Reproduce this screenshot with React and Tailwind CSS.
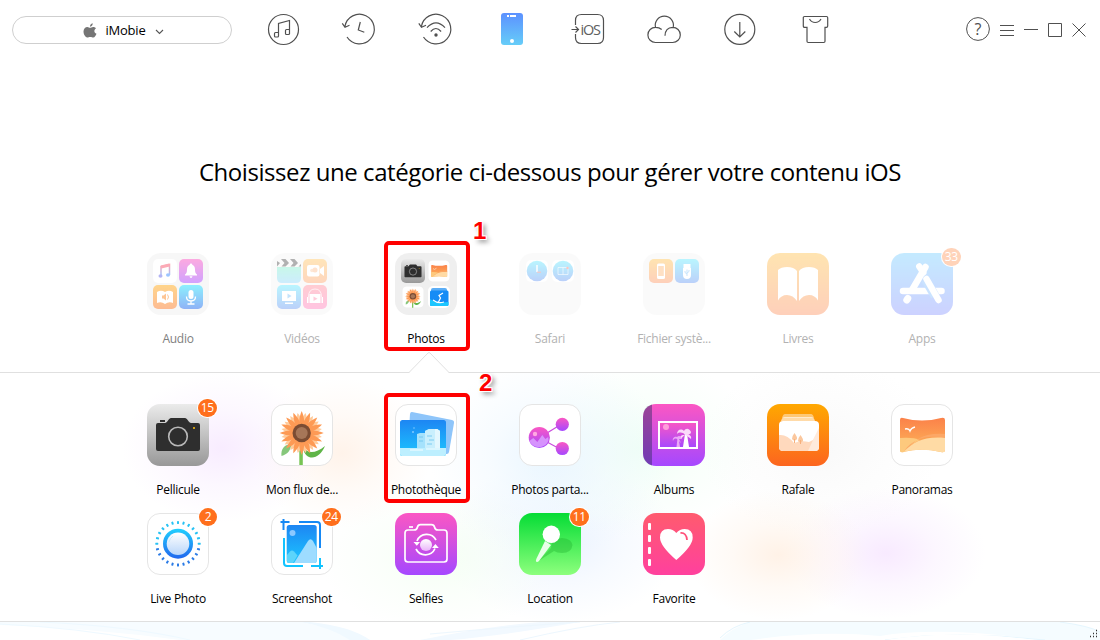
import React from "react";
import clsx from "clsx";

const GRADIENTS = [
  ["orange", "#ffa800", "#fc651f"],
  ["pink", "#fb57c3", "#a548ff"],
  ["cyan", "#1fd0ff", "#2167ee"],
  ["sky", "#1d86f3", "#1cc6ff"],
  ["green", "#05dc35", "#8dff7d"],
  ["rose", "#ff5b6e", "#ff409e"],
  ["grey", "#ebebeb", "#989898"],
  ["store", "#3fbcff", "#5a6bff"],
  ["phone", "#5c91ff", "#66cdf8"],
  ["lens", "#ffffff", "#b9d6fa"],
  ["selfie", "#ffffff", "#e9b4fa"],
  ["dusk", "#fb8149", "#fdb75b"],
  ["mint", "#4de9b8", "#5cc3fb"],
  ["azure", "#1ce1ff", "#2167ee"],
  ["book", "#ffab1a", "#fd7a29"],
  ["note", "#ff4f66", "#3c8dff"],
];

function Gradients() {
  return (
    <svg className="absolute h-0 w-0" aria-hidden="true">
      <defs>
        {GRADIENTS.map(([id, from, to]) => (
          <linearGradient key={id} id={id} x1="0" y1="0" x2="0" y2="1">
            <stop offset="0" stopColor={from} />
            <stop offset="1" stopColor={to} />
          </linearGradient>
        ))}
      </defs>
    </svg>
  );
}

// Every tile is drawn on a 62 x 62 grid
function Art({ children, ...props }) {
  return <svg width="62" height="62" viewBox="0 0 62 62" fill="none" {...props}>{children}</svg>;
}

const Filled = ({ fill }) => <rect width="62" height="62" rx="13" fill={fill} />;
const Blank = () => <rect x=".5" y=".5" width="61" height="61" rx="12.5" fill="#fff" stroke="#e5e5e5" />;

function CameraArt(props) {
  return (
    <Art {...props}>
      <Filled fill="url(#grey)" />
      <path d="M13 16h5v2h-5z" fill="#2e2e2e" />
      <path d="M11 19h7c2 0 4-5 6-5h14c2 0 4 5 6 5h7q2 0 2 2v24q0 2-2 2H11q-2 0-2-2V21q0-2 2-2z" fill="#2e2e2e" />
      <circle cx="31" cy="32.5" r="9.3" stroke="#b9b9b9" strokeWidth="1.6" />
      <path d="M46 23h2v2h-2z" fill="#c99b14" />
    </Art>
  );
}

function SunflowerArt(props) {
  return (
    <Art {...props}>
      <Blank />
      <path d="M28.3 42h3.5v19h-3.5z" fill="#77c455" />
      <path d="M10.5 52c-1-7 3-12 10-12-1 7-4 10-10 12z" fill="#86c77b" />
      <path d="M32 42c4 8 12 8 22 0-4 9-10 13-16 11-4-2-6-6-6-11z" fill="#5fb548" />
      <g fill="#ffcb9b">
        {Array.from({ length: 16 }, (_, i) => (
          <path key={i} d="M30.7 29c-5-9-3-15 0-20.500 3 5.500 5 11.500 0 20.500z" transform={`rotate(${i * 22.5 + 11} 30.7 29)`} />
        ))}
      </g>
      <g fill="#fd9a55">
        {Array.from({ length: 16 }, (_, i) => (
          <path key={i} d="M30.7 29c-4-9-2.500-16 0-22 2.500 6 4 13 0 22z" transform={`rotate(${i * 22.5} 30.7 29)`} />
        ))}
      </g>
      <circle cx="30.7" cy="29" r="9.2" fill="#7b4c33" />
      <circle cx="30.7" cy="29" r="6" fill="#a67658" />
    </Art>
  );
}

function LibraryArt(props) {
  return (
    <Art {...props}>
      <Blank />
      <path d="M17 8l40 8q2.4.5 2 3l-5 29q-.5 2.500-3 2L13 42l2-32q.3-2.300 2-2z" fill="#8ec5fa" />
      <rect x="5" y="16" width="46" height="36" rx="2.500" fill="url(#sky)" />
      <path d="M22 44V30l3-1h5v-2l4-2h8l3 2v17z" fill="#a5e2fc" />
      <path d="M30 44V27l4-2h8l3 2v17z" fill="#c9effd" />
      <path d="M40 25h2l3 2v17h-5z" fill="#e3f7fe" />
      <path d="M24 33h4M24 37h4M32 32h5M34 36h5M32 40h5" stroke="#6cc4ee" strokeWidth=".8" />
      <path d="M5 44h46v5.500q0 2.500-2.500 2.500h-41Q5 52 5 49.500z" fill="#bdefff" />
      <path d="M15 46h13M31 45h14" stroke="#e4f9ff" strokeWidth="1.500" />
      <circle cx="19" cy="24" r=".8" fill="#7fc9ff" />
      <circle cx="18" cy="28" r="1" fill="#7fc9ff" />
    </Art>
  );
}

function ShareArt() {
  return (
    <Art>
      <Blank />
      <path d="M28 29l13-8M28 38l13 7" stroke="#c94bdd" strokeWidth="1.200" />
      <circle cx="43.300" cy="20.300" r="6.600" fill="url(#pink)" />
      <circle cx="43.300" cy="44.500" r="6.600" fill="url(#pink)" />
      <circle cx="20.300" cy="33.500" r="10.600" fill="url(#pink)" />
      <path d="M10.300 37l4-3 4 4 5-7 3 4 3-2q1 3-1 6a10.600 10.600 0 0 1-18-2z" fill="#dba0ff" fillOpacity=".85" />
      <circle cx="16" cy="30" r="2.200" fill="#ffa9e2" />
    </Art>
  );
}

function AlbumsArt() {
  return (
    <Art>
      <Filled fill="url(#pink)" />
      <path d="M9 .6V61.400Q0 59 0 49V13Q0 3 9 .6z" fill="#3b2f6b" fillOpacity=".5" />
      <rect x="16" y="18" width="38" height="26" fill="url(#pink)" stroke="#fff" strokeWidth="2" />
      <circle cx="23" cy="23" r="3" fill="#ff9edb" />
      <path d="M40 43l2-13h2l2 13z" fill="#fff" />
      <path d="M42 31c-2-3-6-3-8-1 0-4 4-6 7-3 2-4 6-2 7 1 0 3-3 2-5 2 3 0 6 2 5 5-2-2-4-3-6-4-2 1-3 3-4 4-2-2 0-4 3-4z" fill="#fbd9fa" />
      <path d="M33.500 43l1-9h1l1.500 9zM35 36c-2-2-4-2-5 1-1-3 2-5 4-4 2-2 4-1 5 2l-3 0 2 4z" fill="#eba8f8" />
    </Art>
  );
}

function BurstArt() {
  return (
    <Art>
      <Filled fill="url(#orange)" />
      <path d="M18 10h26q2 0 3 4H15q1-4 3-4z" fill="#fff" fillOpacity=".45" />
      <path d="M14 17q1-4 4-4h26q3 0 4 4z" fill="#fff" fillOpacity=".65" />
      <rect x="12" y="17" width="40" height="30" rx="4" fill="#fff" />
      <path d="M12 31q8-1 15 8 7-3 15-1l4-2 6-12v19q0 4-4 4H16q-4 0-4-4z" fill="#ffd9bd" />
      <path d="M41 47l11-24v20q0 4-4 4z" fill="#fff" fillOpacity=".45" />
      <path d="M27.500 29q3 4 2.500 6-2.500 3-5 0 0-3 2.500-6zM33.500 31q3 4 2.500 6-2.500 3-5 0 0-3 2.500-6z" fill="#fbc79d" />
      <path d="M27.500 35v4M33.500 36v4" stroke="#f7b07c" />
    </Art>
  );
}

function PanoramaArt(props) {
  return (
    <Art {...props}>
      <Blank />
      <path d="M9 16q0-3 3-2 19 5 38 0 4-1 4 2v30q0 3-4 2-19-5-38 0-3 1-3-2z" fill="url(#dusk)" />
      <path d="M9 34q13-1 20 2-10 4-16 12-4 1-4-2z" fill="#fdc97d" />
      <path d="M13 47c11-14 24-16 41-13V30q-18-1-27 5z" fill="#fca766" />
      <path d="M13 47.500C23 38 33 32 54 34v12q0 3-4 2-19-4-37-.5z" fill="#ffdba5" />
      <path d="M14 25q4-1 5 2 1-3 5-4" stroke="#fff" strokeWidth="1.300" />
    </Art>
  );
}

function LivePhotoArt() {
  return (
    <Art>
      <Blank />
      <g>
        {Array.from({ length: 24 }, (_, i) => (
          <rect key={i} x="30" y="8" width="2" height="3" rx=".4" fill={i > 6 && i < 18 ? "#2a7be6" : "#28c2f4"} transform={`rotate(${i * 15} 31 30.700)`} />
        ))}
      </g>
      <circle cx="31" cy="30.700" r="15" fill="url(#cyan)" />
      <circle cx="31" cy="30.700" r="11.300" fill="url(#lens)" />
      <path d="M22 29q1-4 4-6" stroke="#c5ecfc" />
    </Art>
  );
}

function ScreenshotArt() {
  return (
    <Art>
      <Blank />
      <rect x="15.700" y="12" width="30" height="38" rx="2.500" fill="url(#sky)" />
      <path d="M23 50l14-22q2.500-3.500 5 0l3.700 7v12.500q0 2.500-2.500 2.500z" fill="#9edcff" />
      <path d="M16 42l3-3.500q2-2 4 0l3.500 4L22 50h-4q-2 0-2-2z" fill="#5cd4fb" />
      <circle cx="21.500" cy="20" r="3" fill="#8cc8ff" />
      <g strokeWidth="2">
        <path d="M9.500 9h9M12.500 6v11M28 9h18q3 0 3 3v23" stroke="#1689f5" />
        <path d="M13 25v25q0 3 3 3h16M40 53h12M49 45v11" stroke="#11c3ff" />
      </g>
    </Art>
  );
}

function SelfiesArt() {
  return (
    <Art>
      <Filled fill="url(#pink)" />
      <g stroke="#fff" strokeWidth="1.700">
        <path d="M14 14h4" />
        <path d="M13 17h6q3 0 3.500-3 .5-2.300 3-2.300h11q2.500 0 3 2.300.500 3 3.500 3H49q3 0 3 3v26q0 3-3 3H13q-3 0-3-3V20q0-3 3-3z" />
        <path d="M22 28a10.500 10.500 0 0 1 19-1M40 35.500a10.500 10.500 0 0 1-19 .5" />
      </g>
      <path d="M18.500 29h6.500l-3.200 3.800zM37 35h6.800l-3.400-4z" fill="#fff" />
      <circle cx="31" cy="32" r="6" fill="url(#selfie)" />
    </Art>
  );
}

function LocationArt() {
  return (
    <Art>
      <Filled fill="url(#green)" />
      <path d="M18 49l14-14q0-9 11-10 10 1 10.500 7-1 8-10.500 8-5 0-8-2z" fill="#1eab2c" fillOpacity=".35" />
      <path d="M26 28l6 4-12 16q-1.500 1.500-2.700.8-.8-.8 0-2.800z" fill="#e9ffe9" />
      <circle cx="32.300" cy="21.300" r="8.700" fill="#fff" />
    </Art>
  );
}

function FavoriteArt() {
  return (
    <Art>
      <Filled fill="url(#rose)" />
      <g fill="#fff">
        {[10, 22, 34, 46].map((y) => <rect key={y} x="5" y={y} width="3" height="7" rx="1" />)}
        <path d="M33.300 47Q17 33 17 24.500 17 16 25 16q5 0 8.300 4 3.400-4 8.400-4 8 0 8 8.500Q49.700 33 33.300 47z" />
      </g>
      <path d="M37.500 20q6-.5 6.500 7" stroke="#ff5079" strokeWidth="1.800" />
    </Art>
  );
}

function BooksArt() {
  return (
    <Art>
      <Filled fill="url(#orange)" />
      <path d="M11 17q3-3 9-3 7 0 10 4v30q-4-6-10-6-6 0-9 5.500zM51 17q-3-3-9-3-7 0-10 4v30q4-6 10-6 6 0 9 5.500z" fill="#fff" />
    </Art>
  );
}

function AppsArt() {
  return (
    <Art>
      <Filled fill="url(#store)" />
      <g strokeLinecap="round" strokeWidth="6.500">
        <path d="M12 38h38.500" stroke="#fff" />
        <path d="M34.500 14L21 37" stroke="#fff" />
        <path d="M16.800 45.500l-1 1.500" strokeWidth="7" stroke="#fff" />
        <path d="M34.500 26.500L44 43" stroke="#54a4ff" strokeWidth="9" strokeLinecap="butt" />
        <path d="M28.300 13.500l4 6M35.500 26L47.500 47" stroke="#fff" />
      </g>
    </Art>
  );
}

// Folder tile: up to four minis in a 2 x 2 arrangement
const SLOTS = [[6, 6], [32, 6], [6, 32], [32, 32]];

function Folder({ fill = "#f0f0f0", items }) {
  return (
    <Art>
      <rect width="62" height="62" rx="14" fill={fill} />
      {items.map((Item, i) => (
        <svg key={i} x={SLOTS[i][0]} y={SLOTS[i][1]} width="24" height="24" viewBox="0 0 24 24" fill="none"><Item /></svg>
      ))}
    </Art>
  );
}

const Mini = ({ fill }) => <rect width="24" height="24" rx="5" fill={fill} />;

const MusicMini = () => (
  <>
    <Mini fill="#fff" />
    <path d="M8 17V7.500l8.500-2V16" stroke="url(#note)" strokeWidth="1.500" />
    <path d="M8 8l8.500-2" stroke="#fb5770" strokeWidth="3" />
    <ellipse cx="7.500" cy="17" rx="2" ry="1.700" fill="#6a6bea" />
    <ellipse cx="15" cy="16" rx="2" ry="1.700" fill="#3c8dff" />
  </>
);
const BellMini = () => (
  <>
    <Mini fill="url(#pink)" />
    <path d="M12 4.500q1.300 0 1.300 1.300 2.700 1 2.700 4.700 0 4 2 5v1H6v-1q2-1 2-5 0-3.700 2.700-4.700 0-1.300 1.300-1.300zM10.500 17.300h3q-.3 1.700-1.500 1.700t-1.500-1.700z" fill="#fff" />
  </>
);
const AudioBookMini = () => (
  <>
    <Mini fill="url(#book)" />
    <path d="M4 7q4-2.500 8 0 4-2.500 8 0v11q-4-2-8 1-4-3-8-1z" fill="#fff" />
    <path d="M9 10.500h1.500L13 8.500v7l-2.500-2H9z" fill="#fd8c2b" />
    <path d="M14.500 9.500q2 2.500 0 5" stroke="#fd8c2b" />
  </>
);
const MicMini = () => (
  <>
    <Mini fill="url(#azure)" />
    <rect x="9.500" y="5" width="5" height="9" rx="2.500" fill="#fff" />
    <path d="M7.500 11.500q0 4.500 4.500 4.500t4.500-4.500M12 16v3M8.500 19h7" stroke="#fff" strokeWidth="1.300" />
  </>
);
const ClapperMini = () => (
  <>
    <path d="M0 8h24v11q0 5-5 5H5q-5 0-5-5z" fill="url(#mint)" />
    <path d="M0 2l3 2-3 3.500zM4 0h4.500l3.500 4-3.500 3.500H4.500L7.500 4zM13 0h4.500L21 4l-3.500 3.500h-4L16.500 4zM21.500 7.500L24 5v2.500z" fill="#000" />
  </>
);
const CamcorderMini = () => (
  <>
    <Mini fill="url(#book)" />
    <rect x="4" y="6" width="12.500" height="11.500" rx="2" fill="#fff" />
    <path d="M17 10l4-3v10l-4-3z" fill="#fff" />
    <circle cx="9" cy="11.500" r="1.800" fill="#fdb67c" />
    <circle cx="12" cy="11" r="2.500" fill="#fda15f" />
  </>
);
const TvMini = () => (
  <>
    <Mini fill="url(#azure)" />
    <path d="M5 6h14v10H5zM8 17.500h8V19H8z" fill="#fff" />
    <path d="M10.500 8.500l4 2.500-4 2.500z" fill="#3ca4f5" />
  </>
);
const HeadsetMini = () => (
  <>
    <Mini fill="url(#rose)" />
    <path d="M5.500 12q0-8 6.500-8t6.500 8" stroke="#fff" strokeOpacity=".7" />
    <path d="M6.500 9h11v9h-11zM4 12h1.500v6H4zM18.500 12H20v6h-1.500z" fill="#fff" />
    <path d="M10.500 11.500l4 2.300-4 2.300z" fill="#ff5a8a" />
  </>
);
const CameraMini = () => <CameraArt width="24" height="24" />;
const PanoramaMini = () => <PanoramaArt x="1" y="1" width="22" height="22" />;
const SunflowerMini = () => <SunflowerArt x="1" y="1" width="22" height="22" />;
const SkiMini = () => (
  <>
    <rect x="1" y="1" width="22" height="22" rx="5" fill="#fff" />
    <path d="M4 5q0-2 2-2h12q2 0 2 2v2H4z" fill="#5caef6" />
    <rect x="3" y="5.500" width="18.500" height="15.500" rx="1.500" fill="#168cf6" />
    <path d="M3 14q5 4 18.500 3v2.500q0 1.500-1.500 1.500H4.500Q3 21 3 19.500z" fill="#1cc6ff" />
    <path d="M16 8l-4 2.500 1.500 2.500-2 4M6 15q5 4 11 2" stroke="#fff" strokeWidth="1.200" />
  </>
);
const ClockMini = () => (
  <>
    <rect x="1" y="1" width="22" height="22" rx="5" fill="#fff" />
    <circle cx="12" cy="12" r="10.300" fill="url(#azure)" />
    <path d="M12 6v7" stroke="#fff" strokeWidth="1.500" />
    <path d="M12 13.200h4" stroke="#fa3e2d" />
  </>
);
const MapMini = () => (
  <>
    <rect x="1" y="1" width="22" height="22" rx="5" fill="#fff" />
    <circle cx="12" cy="12" r="10.300" fill="url(#azure)" />
    <path d="M7 8.500h10v7H7zM12 8.500v7" stroke="#fff" strokeOpacity=".6" />
    <circle cx="16.500" cy="9" r="1.200" fill="#fa3e2d" />
  </>
);
const DeviceMini = () => (
  <>
    <Mini fill="url(#orange)" />
    <rect x="8" y="4.500" width="8" height="15.500" rx="1.500" fill="#fff" />
    <path d="M9.200 7h5.600v10H9.200z" fill="#fd9a3e" />
  </>
);
const UsbMini = () => (
  <>
    <Mini fill="url(#azure)" />
    <path d="M8.500 5h7v4h-7zM8 9h8v7q0 4-4 4t-4-4z" fill="#fff" />
    <path d="M12 17v-6.500M12 15l-2-1.500V12M12 14l2-1.500V11" stroke="#3ca4f5" strokeWidth=".9" />
  </>
);

const AudioArt = () => <Folder items={[MusicMini, BellMini, AudioBookMini, MicMini]} />;
const VideosArt = () => <Folder items={[ClapperMini, CamcorderMini, TvMini, HeadsetMini]} />;
const PhotosArt = () => <Folder fill="#efefef" items={[CameraMini, PanoramaMini, SunflowerMini, SkiMini]} />;
const SafariArt = () => <Folder items={[ClockMini, MapMini]} />;
const FilesArt = () => <Folder items={[DeviceMini, UsbMini]} />;

const CATEGORIES = [
  { label: "Audio", art: AudioArt, tone: "opacity-50" },
  { label: "Vidéos", art: VideosArt, tone: "opacity-30" },
  { label: "Photos", art: PhotosArt, step: "1" },
  { label: "Safari", art: SafariArt, tone: "opacity-30" },
  { label: "Fichier systè...", art: FilesArt, tone: "opacity-30" },
  { label: "Livres", art: BooksArt, tone: "opacity-30" },
  { label: "Apps", art: AppsArt, tone: "opacity-30", badge: 33 },
];

const ALBUMS = [
  { label: "Pellicule", art: CameraArt, badge: 15 },
  { label: "Mon flux de...", art: SunflowerArt },
  { label: "Photothèque", art: LibraryArt, step: "2" },
  { label: "Photos parta...", art: ShareArt },
  { label: "Albums", art: AlbumsArt },
  { label: "Rafale", art: BurstArt },
  { label: "Panoramas", art: PanoramaArt },
  { label: "Live Photo", art: LivePhotoArt, badge: 2 },
  { label: "Screenshot", art: ScreenshotArt, badge: 24 },
  { label: "Selfies", art: SelfiesArt },
  { label: "Location", art: LocationArt, badge: 11 },
  { label: "Favorite", art: FavoriteArt },
];

function Tile({ label, art: Drawing, badge, tone, step }) {
  return (
    <div className="relative flex flex-col items-center">
      <div className={clsx("relative", tone)}>
        <Drawing />
        {badge && (
          <span className="absolute -right-2 -top-[5px] flex h-[18px] min-w-[18px] items-center justify-center rounded-full bg-[#ff6f1c] px-[3px] text-[12px] leading-none tracking-[-0.2px] text-white ring-1 ring-white">{badge}</span>
        )}
      </div>
      <span className={clsx("mt-4 whitespace-nowrap text-[12px] leading-4 tracking-[-0.27px]", !tone && "text-black", tone === "opacity-50" && "text-[#808080]", tone === "opacity-30" && "text-[#b2b2b2]")}>{label}</span>
      {step && <Marker step={step} />}
    </div>
  );
}

function Marker({ step }) {
  const first = step === "1";
  return (
    <>
      <div className={clsx("absolute left-[20px] w-[86px] rounded-[5px] border-4 border-[#fe0000]", first ? "-top-[12px] h-[110px]" : "-top-[11px] h-[110px]")} />
      <span className={clsx("absolute text-[24px] font-bold leading-7 text-[#fe0000] [font-family:'Liberation_Sans',sans-serif] [text-shadow:1px_1px_#fff,-1px_-1px_#fff,-1px_1px_#fff,1px_-1px_#fff,3px_3px_5px_#888]", first ? "left-[109px] -top-[36px]" : "left-[115px] -top-[35px]")}>{step}</span>
    </>
  );
}

function NavIcon({ children }) {
  return <svg width="36" height="36" viewBox="0 0 36 36" fill="none" stroke="#505050" strokeWidth="1.200">{children}</svg>;
}

const BackArc = () => <path d="M6 26A14.800 14.800 0 1 0 3.900 15.500M1.300 12.300L4 16.300l4.500-2" />;

function Toolbar() {
  return (
    <header className="flex h-[60px] items-start">
      <button className="ml-3 mt-4 flex h-7 w-[220px] items-center justify-center rounded-full border border-[#cfcfcf] pl-[3px] text-[13px] tracking-[-0.2px]">
        <svg className="mr-2" width="14" height="15" viewBox="0 0 14 15" fill="#757575">
          <path d="M9.700.2q.2 2.800-2.700 3.600Q6.900 1 9.700.2zM7 4.700c1 0 1.800-.9 3.300-.8 1.200 0 2.100.6 2.700 1.400-2.400 1.700-2 4.500.5 5.500-.6 1.800-1.900 3.800-3.200 3.800-1.100 0-1.700-.6-3-.6s-2 .6-3 .6C2.500 14.600.500 11.500.500 8.600c0-3 1.800-4.700 3.900-4.700 1.200 0 1.800.8 2.600.8z" />
        </svg>
        <span className="pt-[2px]">iMobie</span>
        <svg className="ml-[9px] mt-[3px]" width="9" height="6" viewBox="0 0 9 6" fill="none" stroke="#555" strokeWidth="1.100"><path d="M1 1l3.500 3.500L8 1" /></svg>
      </button>
      <nav className="ml-[33px] mt-[11px] flex gap-10">
        <NavIcon>
          <circle cx="18.500" cy="18.500" r="15" />
          <path d="M13.500 25V12.500l11-3V23M13.500 21.500h-3q-1 0-1 1V25q0 1 1 1h2q1 0 1-1zM24.500 18.500h-3q-1 0-1 1V22.500q0 1 1 1h2q1 0 1-1z" />
        </NavIcon>
        <NavIcon><BackArc /><path d="M19.300 11l-2 8 6 2.300" /></NavIcon>
        <NavIcon>
          <g transform="translate(.5 0)"><BackArc /><path d="M9.500 16.700q9-9.500 18 0M13.200 20.500q5.200-6 10.400 0" /><circle cx="18.500" cy="24" r="1.700" fill="#505050" stroke="none" /></g>
        </NavIcon>
        <NavIcon>
          <g stroke="none">
            <rect x="8" y="2" width="22" height="32" rx="3" fill="url(#phone)" />
            <path d="M14 4h2v2h-2zM17 4h6v2h-6z" fill="#fff" />
            <circle cx="19" cy="30" r="2" fill="#fff" />
          </g>
        </NavIcon>
        <NavIcon>
          <path d="M6.500 14V9.500q0-6 6-6h16q6 0 6 6v17q0 6-6 6h-16q-6 0-6-6V23M2.500 18.500h7M6.500 15.500l3 3-3 3" />
          <text x="11.500" y="23.500" fontSize="14.500" fill="#606060" stroke="none" textLength="20.500">iOS</text>
        </NavIcon>
        <NavIcon>
          <path d="M10.500 16.300a9.100 9.100 0 1 1 17.700 0M16.700 18.500q-2.500-2.200-6.200-2.200a7.600 7.600 0 0 0 0 15.200h17.200a7.600 7.600 0 0 0 0-15.200q-7.500.2-7.700 8.500" />
        </NavIcon>
        <NavIcon><circle cx="18.800" cy="18.400" r="15" /><path d="M18.800 11v15M13.300 20.500l5.500 5.500 5.500-5.500" /></NavIcon>
        <NavIcon>
          <path d="M7.500 5.500h22q1.200 0 1.200 1.200V15q0 1.300-1.300 1.300H28v14q0 1.200-1.200 1.200H11.200q-1.200 0-1.200-1.200v-14H7.600q-1.300 0-1.300-1.300V6.700q0-1.200 1.200-1.200zM12.500 8q2 3.500 5.700 3.500T24 8" />
        </NavIcon>
      </nav>
      <div className="ml-auto mr-[14px] mt-[17px] flex items-center gap-[10px]">
        <svg width="24" height="24" viewBox="0 0 24 24" fill="none" stroke="#505050">
          <circle cx="12" cy="12" r="11.400" />
          <text x="12" y="17.500" textAnchor="middle" fontSize="16" fill="#505050" stroke="none">?</text>
        </svg>
        <svg width="14" height="14" viewBox="0 0 14 14" stroke="#505050"><path d="M0 3.500h14M0 8.500h14M0 13.500h14" /></svg>
        <svg width="14" height="14" viewBox="0 0 14 14" stroke="#505050"><path d="M0 7.500h14" /></svg>
        <svg className="mt-[2px]" width="14" height="14" viewBox="0 0 14 14" fill="none" stroke="#505050"><path d="M.500.500h13v13H.500z" /></svg>
        <svg className="mt-[2px]" width="14" height="14" viewBox="0 0 14 14" stroke="#505050"><path d="M.500.500l13 13M13.500.500l-13 13" /></svg>
      </div>
    </header>
  );
}

function Footer() {
  return (
    <footer className="h-[18px] bg-white">
      <svg width="1100" height="18" viewBox="0 0 1100 18" fill="none">
        <path d="M0 0h300q40 8 70 18H180Q90 6 0 3z" fill="#f7fcff" />
        <path d="M300 0q30 5 50 18h20Q350 4 310 0z" fill="#f0f9ff" />
        <path d="M0 2q80 4 140 16M40 0q90 4 150 18" stroke="#eef9ff" />
        <path d="M420 18Q490 4 540 0h40Q500 14 450 18z" fill="#f2f9ff" />
        <path d="M520 18q60-14 100-18M430 12q90-8 150-12" stroke="#edf7fe" />
        <path d="M720 18q12-12 30-18h310q30 4 40 10v8h-60Q940 4 880 14q-60-6-130 4z" fill="#f5fcff" />
        <path d="M720 16q12-12 30-16M885 18q70-10 160 0M1060 0q30 4 40 10" stroke="#e5f6fe" />
        <path d="M885 18q70-11 150 0z" fill="#fff" />
        <path d="M1096 9h1M1093 12h1M1096 12h1M1090 15h1M1093 15h1M1096 15h1" transform="translate(0 -.5)" stroke="#333" strokeWidth="1.500" />
      </svg>
    </footer>
  );
}

export default function App() {
  return (
    <div className="flex h-[640px] w-[1100px] flex-col overflow-hidden bg-white text-black [font-family:'Open_Sans','Noto_Sans',sans-serif]">
      <Gradients />
      <Toolbar />
      <main className="flex flex-1 flex-col">
        <h1 className="mt-24 text-center text-[24px] leading-8 tracking-[-0.44px]">Choisissez une catégorie ci-dessous pour gérer votre contenu iOS</h1>
        <section className="relative mt-[65px] grid h-[120px] grid-cols-[repeat(7,124px)] justify-center border-b border-[#e0e0e0]">
          {CATEGORIES.map((item) => <Tile key={item.label} {...item} />)}
          <svg className="absolute -bottom-px left-[408px]" width="42" height="22" viewBox="0 0 42 22">
            <path d="M1 22L20 2q1-1 2 0l19 20z" fill="#fff" />
            <path d="M0 21.500h1L20 2q1-1 2 0l19 19.500h1" fill="none" stroke="#e0e0e0" />
          </svg>
        </section>
        <section className="grid h-[249px] grid-cols-[repeat(7,124px)] content-start justify-center gap-y-[15px] border-b border-[#e0e0e0] bg-[radial-gradient(100px_75px_at_222px_75px,#f8ecff,#f8ecff66_50%,#f8ecff00),radial-gradient(90px_75px_at_342px_80px,#fff3ea,#fff3ea66_50%,#fff3ea00),radial-gradient(120px_100px_at_550px_85px,#eaf6ff,#eaf6ff66_50%,#eaf6ff00),radial-gradient(120px_90px_at_640px_75px,#f0fff5,#f0fff566_50%,#f0fff500),radial-gradient(120px_75px_at_440px_185px,#f5fff4,#f5fff466_50%,#f5fff400),radial-gradient(120px_80px_at_560px_170px,#ebf3ff,#ebf3ff66_50%,#ebf3ff00),radial-gradient(90px_65px_at_778px_182px,#fff2e7,#fff2e766_50%,#fff2e700),radial-gradient(100px_66px_at_886px_180px,#f8eaff,#f8eaff66_50%,#f8eaff00),radial-gradient(120px_90px_at_820px_75px,#f9f9f9,#f9f9f966_50%,#f9f9f900)] pt-[31px]">
          {ALBUMS.map((item) => <Tile key={item.label} {...item} />)}
        </section>
      </main>
      <Footer />
    </div>
  );
}
